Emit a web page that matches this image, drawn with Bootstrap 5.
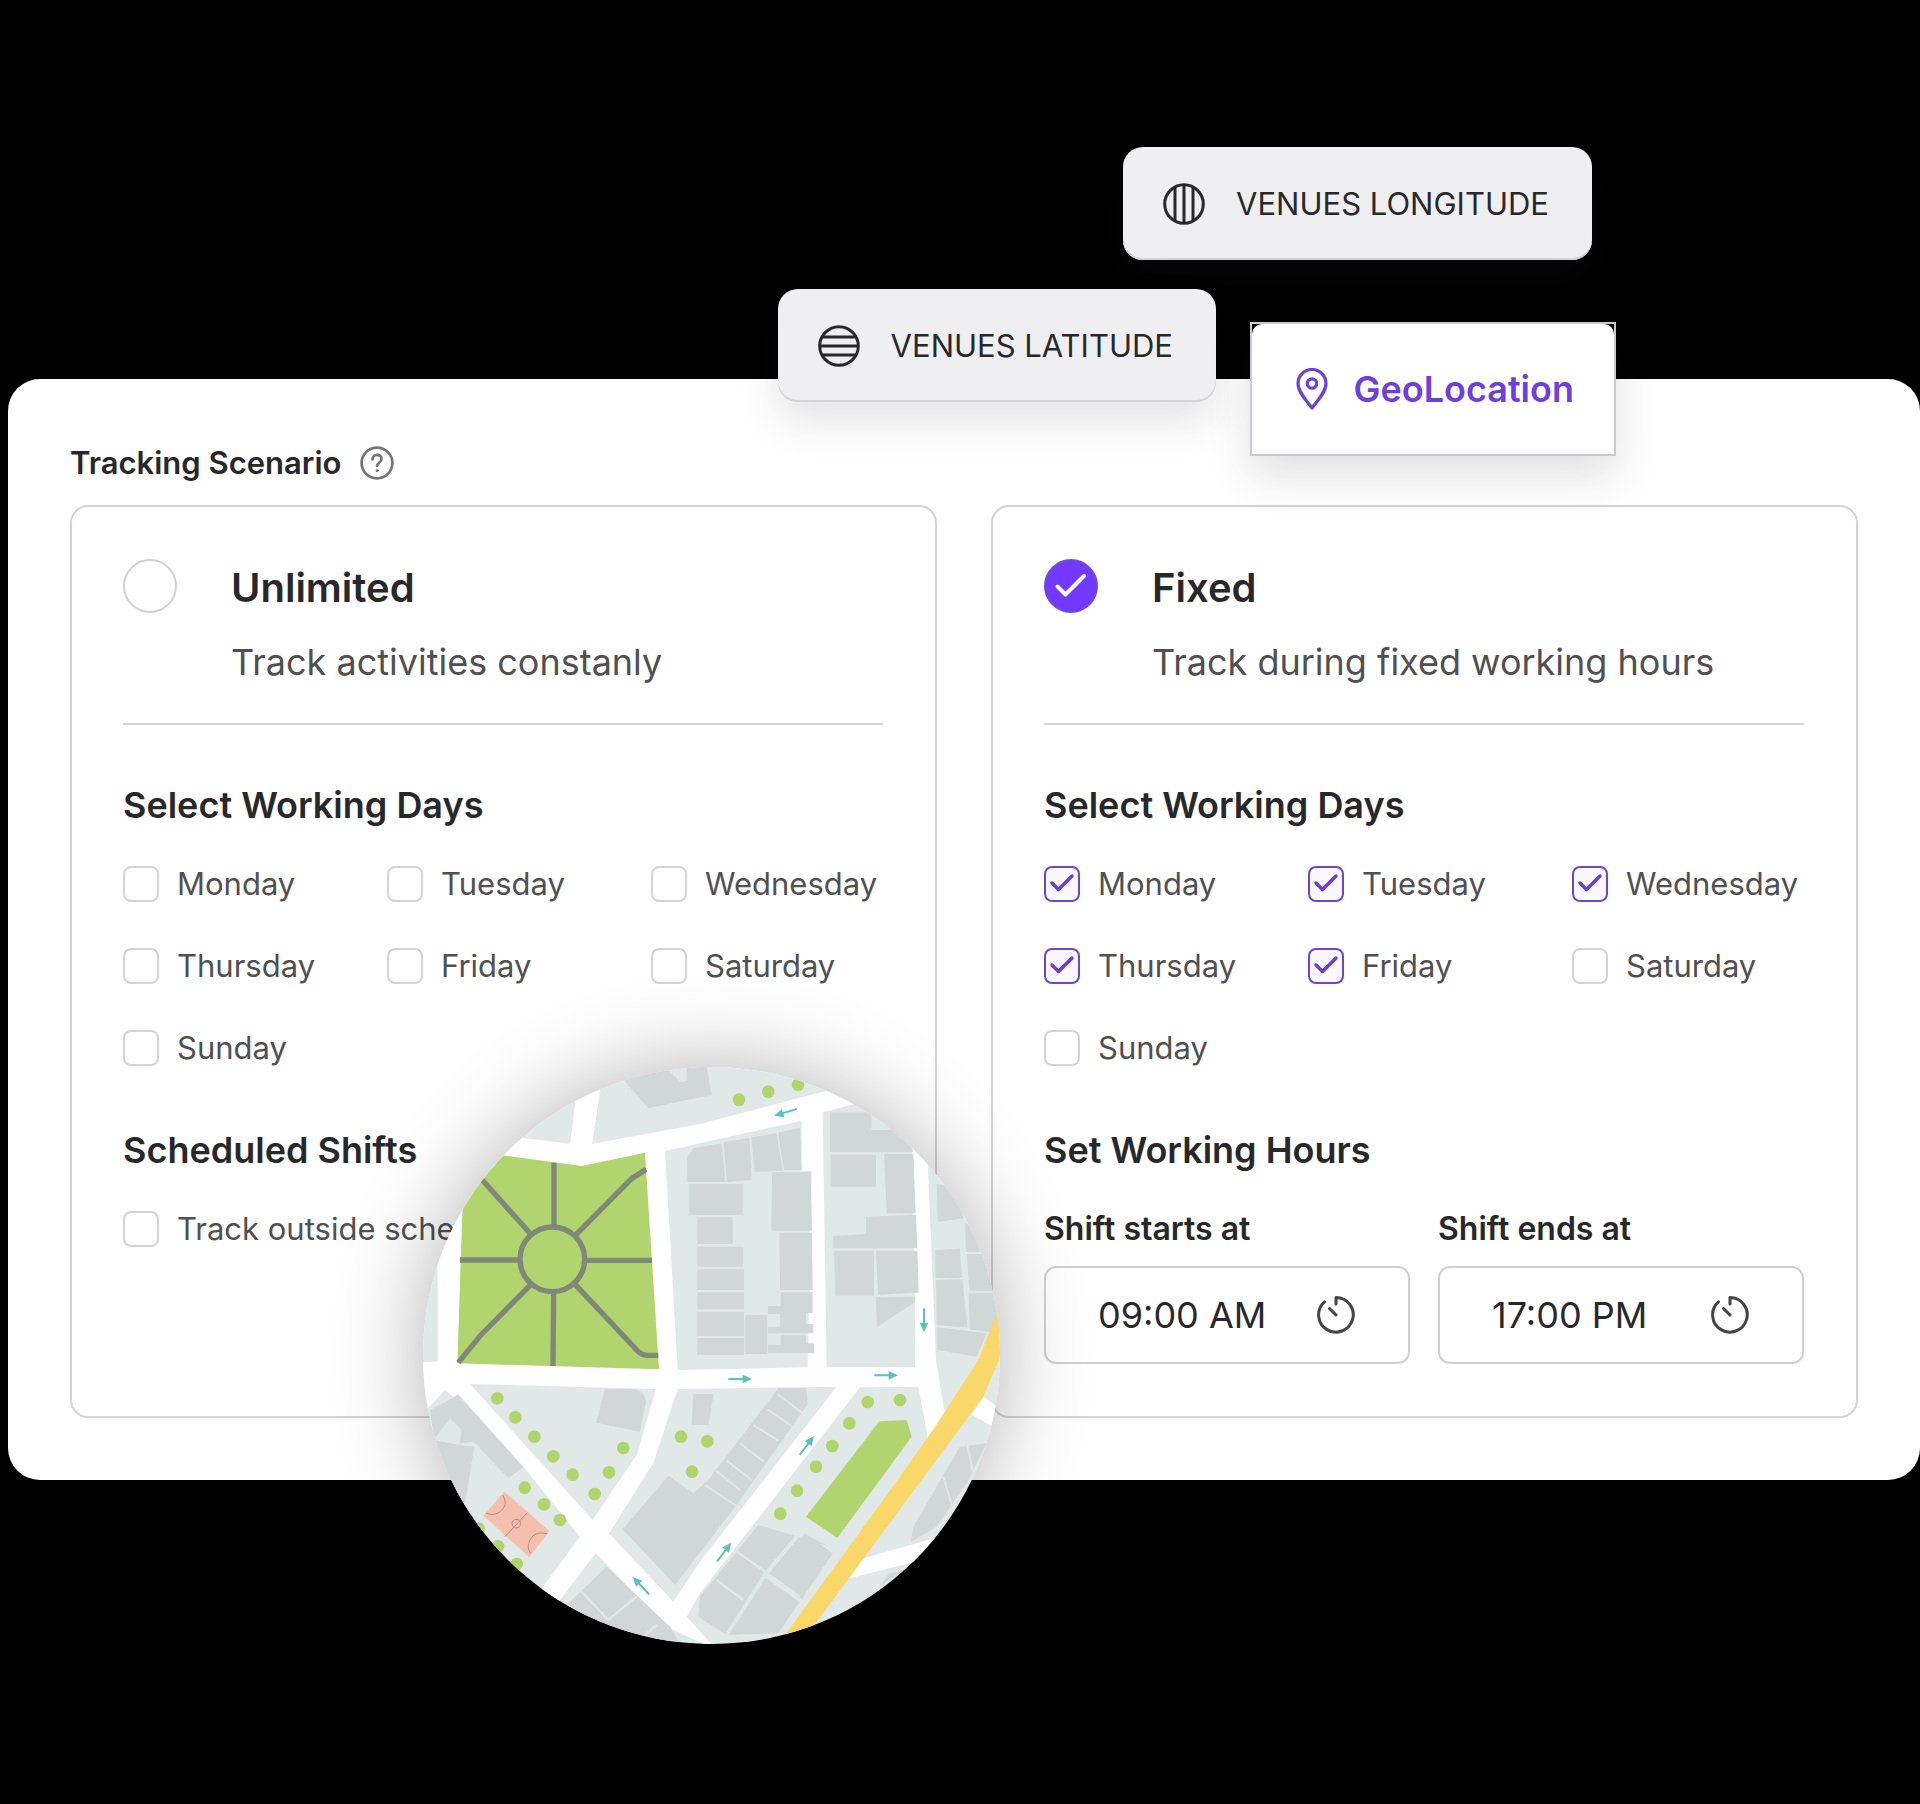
<!DOCTYPE html>
<html lang="en">
<head>
<meta charset="utf-8">
<meta name="viewport" content="width=device-width, initial-scale=1">
<title>Tracking Scenario</title>
<link href="https://cdn.jsdelivr.net/npm/bootstrap@5.3.0/dist/css/bootstrap.min.css" rel="stylesheet">
<style>
  body { background: #000; color: #28282a; font-family: Inter, "Liberation Sans", sans-serif; font-size: 31px; line-height: 36px; }
  .stage { padding-top: 379px; padding-left: 8px; padding-bottom: 324px; }
  .panel { background: #fff; border-radius: 32px; padding: 65px 62px 62px; }
  .panel-title { font-size: 31px; line-height: 38px; font-weight: 600; }
  .help { line-height: 0; color: #757575; }
  .scenarios { gap: 54px; margin-top: 23px; }
  .scenario { flex: 1 1 0; min-width: 0; border: 2px solid #d4d4d4; border-radius: 18px; padding: 52px 52px 52px 51px; }
  .scenario-head { gap: 54px; padding-bottom: 39px; border-bottom: 2px solid #d4d4d4; }
  .scenario-head .form-check-input { width: 54px; height: 54px; border: 2px solid #d0d0d0; }
  .scenario-head .form-check-input:checked { background-color: #7339ff; border-color: #7048dc;
    background-size: 54px; background-image: url("data:image/svg+xml,%3Csvg xmlns='http://www.w3.org/2000/svg' viewBox='0 0 54 54'%3E%3Cpath d='M13.5 27.5l8 8 18.5-18.5' fill='none' stroke='%23fff' stroke-width='4' stroke-linecap='round' stroke-linejoin='round'/%3E%3C/svg%3E"); }
  .scenario-name { font-size: 40px; line-height: 48px; font-weight: 600; padding-top: 5px; }
  .scenario-note { font-size: 36px; line-height: 44px; color: #505052; margin-top: 28px; }
  .part-title { font-size: 36px; line-height: 44px; font-weight: 600; }
  .days-title { margin-top: 58px; }
  .extra-title { margin-top: 62px; }
  .days { display: grid; grid-template-columns: repeat(3, minmax(0, 1fr)); gap: 46px 32px; }
  .days, .outside, .hours { margin-top: 39px; }
  .tick { gap: 18px; color: #505052; white-space: nowrap; }
  .tick .form-check-input { width: 36px; height: 36px; border: 2px solid #d4d4d4; border-radius: 8px; }
  .tick .form-check-input:checked { background-color: #faf8ff; border-color: #6c45d2;
    background-size: 36px; background-position: -2px -3px; background-image: url("data:image/svg+xml,%3Csvg xmlns='http://www.w3.org/2000/svg' viewBox='0 0 36 36'%3E%3Cpath d='M8 18l6.5 6.5L28 11' fill='none' stroke='%236b3bdc' stroke-width='3.4' stroke-linecap='round' stroke-linejoin='round'/%3E%3C/svg%3E"); }
  .hours { gap: 28px; }
  .hours > div { flex: 1 1 0; min-width: 0; }
  .hours label { display: block; font-size: 32px; font-weight: 600; }
  .time-box { margin-top: 19px; height: 98px; border: 2px solid #d0d0d0; border-radius: 12px; padding: 0 52px; }
  .time-box input { border: 0; padding: 0; min-width: 0; flex: 1 1 0; font-size: 36px; line-height: 44px; color: #28282a; background: transparent; }
  .time-box button { line-height: 0; color: #454547; }
  .chip { position: absolute; display: flex; align-items: center; border: 0; white-space: nowrap; }
  .chip-grey { height: 113px; padding: 0 43px 0 40px; gap: 31px; border-radius: 20px; background: #efeff1; color: #28282a; box-shadow: inset 0 -2px 0 #d3d3d6, 0 20px 40px rgba(40, 40, 60, .12); }
  .chip-long { top: 147px; right: 328px; }
  .chip-lat { top: 289px; right: 704px; }
  .chip-geo { top: 322px; right: 304px; padding: 0; border: 2px solid #cbcbcd; background: transparent; color: #6d40dc; font-size: 36px; font-weight: 600; box-shadow: 0 20px 40px rgba(40, 40, 60, .14); }
  .chip-geo > span { display: flex; align-items: center; gap: 25px; height: 130px; padding: 0 40px 0 44px; background: #fff; border-radius: 10px; }
  .map { position: absolute; left: 415px; bottom: -164px; width: 577px; height: 577px; border-radius: 50%; overflow: hidden; box-shadow: 0 0 90px rgba(0, 0, 0, .3); }
</style>
</head>
<body>
<main class="stage position-relative">
  <section class="panel position-relative">
    <div class="d-flex align-items-center gap-3">
      <h1 class="panel-title mb-0">Tracking Scenario</h1>
      <button class="help btn p-0 border-0" type="button" aria-label="Help">
        <svg width="40" height="36" viewBox="0 0 40 36" fill="none" stroke="currentColor" stroke-width="2.7" stroke-linecap="round">
          <circle cx="20" cy="18" r="15.4"/><path d="M15.5 14.5c.2-6 9-6 9-.5 0 3.600-4.500 3.800-4.500 7"/><circle cx="20" cy="25.600" r="1" fill="currentColor" stroke-width="1"/>
        </svg>
      </button>
    </div>

    <div class="scenarios d-flex">
      <article class="scenario">
        <div class="scenario-head d-flex align-items-start">
          <input class="form-check-input m-0 flex-shrink-0" type="radio" name="scenario" id="unlimited">
          <div>
            <label class="scenario-name d-block" for="unlimited">Unlimited</label>
            <p class="scenario-note mb-0">Track activities constanly</p>
          </div>
        </div>
        <h2 class="part-title days-title mb-0">Select Working Days</h2>
        <div class="days">
          <label class="tick d-flex align-items-center"><input class="form-check-input m-0 flex-shrink-0" type="checkbox">Monday</label>
          <label class="tick d-flex align-items-center"><input class="form-check-input m-0 flex-shrink-0" type="checkbox">Tuesday</label>
          <label class="tick d-flex align-items-center"><input class="form-check-input m-0 flex-shrink-0" type="checkbox">Wednesday</label>
          <label class="tick d-flex align-items-center"><input class="form-check-input m-0 flex-shrink-0" type="checkbox">Thursday</label>
          <label class="tick d-flex align-items-center"><input class="form-check-input m-0 flex-shrink-0" type="checkbox">Friday</label>
          <label class="tick d-flex align-items-center"><input class="form-check-input m-0 flex-shrink-0" type="checkbox">Saturday</label>
          <label class="tick d-flex align-items-center"><input class="form-check-input m-0 flex-shrink-0" type="checkbox">Sunday</label>
        </div>
        <h2 class="part-title extra-title mb-0">Scheduled Shifts</h2>
        <label class="tick outside d-flex align-items-center"><input class="form-check-input m-0 flex-shrink-0" type="checkbox">Track outside schedule</label>
      </article>

      <article class="scenario">
        <div class="scenario-head d-flex align-items-start">
          <input class="form-check-input m-0 flex-shrink-0" type="radio" name="scenario" id="fixed" checked>
          <div>
            <label class="scenario-name d-block" for="fixed">Fixed</label>
            <p class="scenario-note mb-0">Track during fixed working hours</p>
          </div>
        </div>
        <h2 class="part-title days-title mb-0">Select Working Days</h2>
        <div class="days">
          <label class="tick d-flex align-items-center"><input class="form-check-input m-0 flex-shrink-0" type="checkbox" checked>Monday</label>
          <label class="tick d-flex align-items-center"><input class="form-check-input m-0 flex-shrink-0" type="checkbox" checked>Tuesday</label>
          <label class="tick d-flex align-items-center"><input class="form-check-input m-0 flex-shrink-0" type="checkbox" checked>Wednesday</label>
          <label class="tick d-flex align-items-center"><input class="form-check-input m-0 flex-shrink-0" type="checkbox" checked>Thursday</label>
          <label class="tick d-flex align-items-center"><input class="form-check-input m-0 flex-shrink-0" type="checkbox" checked>Friday</label>
          <label class="tick d-flex align-items-center"><input class="form-check-input m-0 flex-shrink-0" type="checkbox">Saturday</label>
          <label class="tick d-flex align-items-center"><input class="form-check-input m-0 flex-shrink-0" type="checkbox">Sunday</label>
        </div>
        <h2 class="part-title extra-title mb-0">Set Working Hours</h2>
        <div class="hours d-flex">
          <div>
            <label for="starts">Shift starts at</label>
            <div class="time-box d-flex align-items-center">
              <input type="text" id="starts" value="09:00 AM">
              <button class="btn p-0 border-0" type="button" aria-label="Pick start time"><svg width="40" height="40" viewBox="0 0 40 40" fill="none" stroke="currentColor" stroke-width="3" stroke-linecap="round" stroke-linejoin="round"><path d="M20 9V2.500A17.300 17.300 0 1 1 8.500 6.800M13.500 13.500l6.500 6.500"/></svg></button>
            </div>
          </div>
          <div>
            <label for="ends">Shift ends at</label>
            <div class="time-box d-flex align-items-center">
              <input type="text" id="ends" value="17:00 PM">
              <button class="btn p-0 border-0" type="button" aria-label="Pick end time"><svg width="40" height="40" viewBox="0 0 40 40" fill="none" stroke="currentColor" stroke-width="3" stroke-linecap="round" stroke-linejoin="round"><path d="M20 9V2.500A17.300 17.300 0 1 1 8.500 6.800M13.500 13.500l6.500 6.500"/></svg></button>
            </div>
          </div>
        </div>
      </article>
    </div>

    <div class="map">
      <svg class="d-block" width="577" height="577" viewBox="39 51 1731 1731" role="img" aria-label="City map">
        <rect x="39" y="51" width="1731" height="1731" fill="#e1e9e8"/>
        <!-- roads -->
        <g fill="#fff">
          <path d="M0 200L320 262 490 283 545 282 870 222 1258 120 1340 90 1360 155 1238 187 1250 952H1515V740L1505 240 1550 260 1578 930 1605 1095 1555 1170 1525 1010 1350 1012 870 1630 830 1700 920 1800 770 1730 557 1510 420 1690 370 1650 510 1460 340 1250 145 1032 130 1040 105 1020 30 1100V935H83V655H0z"/>
          <path d="M505 70H578L545 290H480z"/>
          <path d="M1720 1040L1775 1080 1750 1130 1685 1095zM1360 1525L1590 1460 1510 1537 1310 1587z"/>
        </g>
        <!-- ground between the roads -->
        <g fill="#e1e9e8">
          <path d="M765 303L870 280 1175 212 1205 366 1193 952 803 960z"/>
          <path d="M180 1002L738 1017 680 1215 548 1410z"/>
          <path d="M803 1017L1280 1010 870 1535 790 1655 597 1450 730 1240z"/>
        </g>
        <path d="M1175 205H1205V362H1175z" fill="#fff"/>
        <path d="M100 270L270 315 515 348 705 308 747 958 142 940 160 400z" fill="#b1d46e"/>
        <g fill="none" stroke="#7f8978" stroke-width="16">
          <circle cx="427" cy="628" r="97"/>
          <path d="M432 338V530M150 630H328M526 631H726M431 728L429 948M190 360L360 550M498 554L665 386 708 358M360 706L210 858 145 938M496 704L684 904Q696 916 712 916H745"/>
        </g>
        <!-- buildings -->
        <g fill="#d1d6d6">
          <path d="M640 88L720 60 770 55 812 97 830 92V50H890L905 136 870 142 715 175z"/>
          <path d="M832 320L850 295 935 280 946 396H832zM941 277L1018 264 1025 390 950 396zM1024 262L1100 250 1118 362 1034 366zM1104 248L1170 234 1175 360H1122zM838 402H998V495H838zM862 502H968V582H862zM862 590H1000V650H862zM862 658H1002V720H862zM862 727H1002V778H862zM862 785H1002V858H862zM862 864H1002V915H862zM1006 795H1072V912H1006z"/>
          <path d="M1086 367H1202L1206 542H1084zM1108 548H1206L1208 720H1110zM1112 727H1208V788H1188V822H1210V850H1074V830H1110V792H1074V768H1112zM1112 856H1188V880H1212V910H1074V884H1112z"/>
          <path d="M1260 187H1385V240H1455L1508 290V306H1260zM1262 314H1398V410H1262zM1422 312H1510L1517 490H1430zM1368 500L1518 494 1522 595H1270V558L1368 552zM1272 602H1392V737H1276zM1398 602H1522L1526 728 1404 734zM1398 742L1516 740V755L1400 832z"/>
          <path d="M1580 402L1640 410 1660 505 1584 516zM1665 520L1720 540V606H1668zM1576 600L1650 596 1656 684H1577zM1670 612H1750L1760 722H1678zM1578 690L1657 688 1672 832 1580 826zM1676 730H1770V850L1730 845 1680 838zM1582 832L1730 850 1700 920 1582 900z"/>
          <path d="M585 1018H680Q705 1030 708 1055L690 1145 558 1118zM850 1032H910L896 1125H845z"/>
          <path d="M60 1080L145 1035 340 1252 295 1285 195 1178 192 1255 165 1360 90 1290zM0 1120L90 1180 193 1190 165 1360 90 1300z"/>
          <path d="M1105 1015H1188L1193 1062 980 1365 795 1605 638 1438 775 1277 850 1330 895 1290z"/>
          <path d="M590 1550L780 1730 820 1800H700L470 1665zM1045 1425L1260 1490 1180 1452 1265 1515 1105 1750 950 1755 865 1700 870 1640z"/>
          <path d="M1185 1450L1268 1510 1110 1740 1000 1690z"/>
          <path d="M1650 1190L1730 1180 1670 1300 1580 1430 1503 1475 1510 1430zM1435 1572L1480 1560 1410 1610z"/>
        </g>
        <path d="M70 1170L120 1105 155 1140 148 1185zM150 1180L190 1175 205 1190 290 1290 230 1380 160 1400z" fill="#e1e9e8"/>
        <g fill="none" stroke="#e1e9e8" stroke-width="6">
          <path d="M1102 1032L1178 1090M1072 1078L1148 1130M1030 1125L1105 1172M990 1180L1062 1235M950 1232L1025 1290M918 1262L990 1320M885 1305L980 1368"/>
          <path d="M510 1620L595 1710 680 1640M700 1760L740 1725M975 1500L1170 1640M920 1590L1000 1650" stroke-width="7"/>
          <path d="M1170 1448L1065 1575 950 1755M1065 1575L1172 1652" stroke-width="12"/>
          <path d="M1670 1180L1695 1290M1600 1280L1630 1380"/>
        </g>
        <path d="M90 1180L193 1190 165 1360 130 1330z" fill="#d1d6d6"/>
        <path d="M1408 1114L1490 1110 1505 1160 1282 1464 1188 1400z" fill="#b1d46e"/>
        <path d="M1765 780L1705 930 1575 1130 1470 1280 1100 1790H1165L1550 1270 1720 1040 1767 930 1790 800z" fill="#f9d768"/>
        <!-- trees -->
        <g fill="#b1d46c">
          <circle cx="987" cy="149" r="19"/><circle cx="1075" cy="125" r="19"/><circle cx="1164" cy="104" r="19"/>
          <circle cx="262" cy="1045" r="19"/><circle cx="316" cy="1102" r="19"/><circle cx="373" cy="1160" r="19"/><circle cx="430" cy="1219" r="19"/><circle cx="488" cy="1274" r="19"/><circle cx="554" cy="1332" r="19"/><circle cx="597" cy="1267" r="19"/><circle cx="640" cy="1194" r="19"/>
          <circle cx="344" cy="1313" r="19"/><circle cx="402" cy="1363" r="19"/><circle cx="450" cy="1410" r="19"/><circle cx="206" cy="1436" r="19"/><circle cx="264" cy="1489" r="19"/><circle cx="320" cy="1542" r="19"/>
          <circle cx="813" cy="1160" r="19"/><circle cx="892" cy="1174" r="19"/><circle cx="846" cy="1265" r="19"/>
          <circle cx="1373" cy="1056" r="19"/><circle cx="1470" cy="1050" r="19"/><circle cx="1318" cy="1120" r="19"/><circle cx="1267" cy="1188" r="19"/><circle cx="1218" cy="1250" r="19"/><circle cx="1161" cy="1322" r="19"/><circle cx="1111" cy="1391" r="19"/>
        </g>
        <!-- sports court -->
        <path d="M283 1325L418 1443 358 1522 220 1397z" fill="#f4bfac"/>
        <path d="M278 1335Q298 1365 268 1387 245 1400 228 1388M352 1388L285 1460M412 1452Q375 1440 360 1470 348 1492 362 1510" fill="none" stroke="#b58c80" stroke-width="3"/>
        <circle cx="319" cy="1421" r="13" fill="none" stroke="#b58c80" stroke-width="3"/>
        <!-- one-way arrows -->
        <defs><path id="way" d="M-35-3H8V-13L36 0 8 13V3H-35z" fill="#58c2bb"/></defs>
        <use href="#way" transform="translate(1127 187) rotate(163)"/>
        <use href="#way" transform="translate(1542 810) rotate(90)"/>
        <use href="#way" transform="translate(990 987)"/>
        <use href="#way" transform="translate(1428 976)"/>
        <use href="#way" transform="translate(1190 1187) rotate(-53)"/>
        <use href="#way" transform="translate(942 1507) rotate(-53)"/>
        <use href="#way" transform="translate(693 1607) rotate(-133)"/>
      </svg>
    </div>
  </section>

  <button class="chip chip-grey chip-long" type="button">
    <svg width="42" height="42" viewBox="0 0 42 42" fill="none" stroke="currentColor" stroke-width="3"><circle cx="21" cy="21" r="19.300"/><path d="M12 4V38M21 2V40M30 4V38"/></svg>
    VENUES LONGITUDE
  </button>
  <button class="chip chip-grey chip-lat" type="button">
    <svg width="42" height="42" viewBox="0 0 42 42" fill="none" stroke="currentColor" stroke-width="3"><circle cx="21" cy="21" r="19.300"/><path d="M4 12H38M2 21H40M4 30H38"/></svg>
    VENUES LATITUDE
  </button>
  <button class="chip chip-geo" type="button">
    <span>
      <svg width="32" height="42" viewBox="0 0 32 42" fill="none" stroke="currentColor" stroke-width="3.200" stroke-linejoin="round"><path d="M16 40C11 33 2 24.500 2 15.500a14 14 0 0 1 28 0C30 24.500 21 33 16 40z"/><circle cx="16" cy="15.500" r="4.700"/></svg>
      GeoLocation
    </span>
  </button>
</main>
<script src="https://cdn.jsdelivr.net/npm/bootstrap@5.3.0/dist/js/bootstrap.bundle.min.js"></script>
</body>
</html>
